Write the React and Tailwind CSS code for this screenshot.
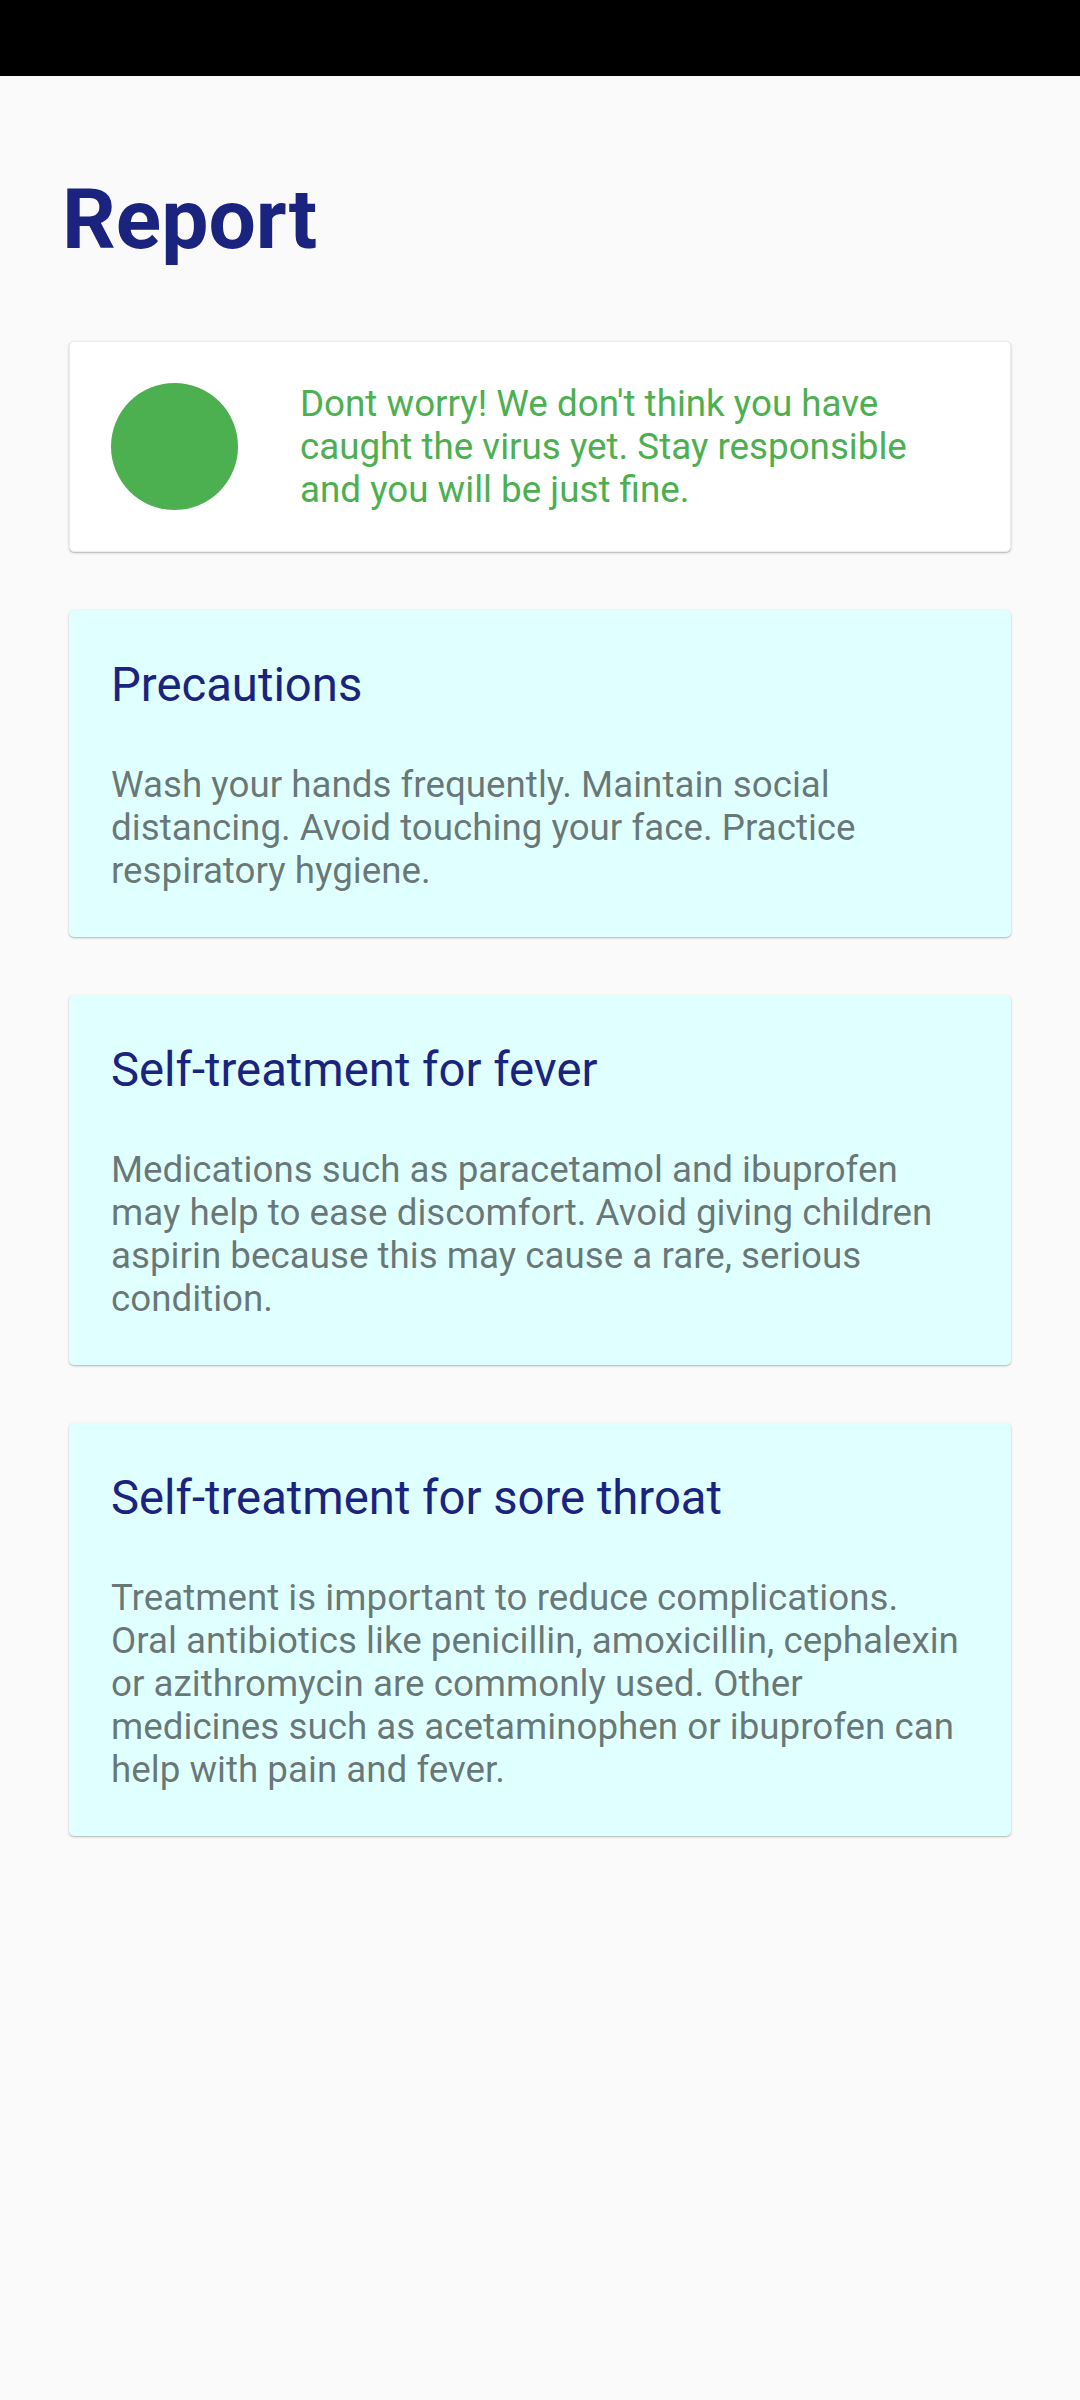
const tips = [
  {
    title: "Precautions",
    body: "Wash your hands frequently. Maintain social distancing. Avoid touching your face. Practice respiratory hygiene.",
  },
  {
    title: "Self-treatment for fever",
    body: "Medications such as paracetamol and ibuprofen may help to ease discomfort. Avoid giving children aspirin because this may cause a rare, serious condition.",
  },
  {
    title: "Self-treatment for sore throat",
    body: "Treatment is important to reduce complications. Oral antibiotics like penicillin, amoxicillin, cephalexin or azithromycin are commonly used. Other medicines such as acetaminophen or ibuprofen can help with pain and fever.",
  },
];

const cardShadow =
  "shadow-[0_1px_3px_rgba(0,0,0,0.18),0_1px_1px_rgba(0,0,0,0.12)]";

export default function App() {
  return (
    <div
      className="min-h-screen bg-[#fafafa]"
      style={{ fontFamily: "Roboto, 'Noto Sans', sans-serif" }}
    >
      <div className="h-[76px] bg-black" />

      <h1 className="mt-[95px] pl-[62px] text-[84px] leading-[98px] font-bold text-[#1a237e]">
        Report
      </h1>

      <div className="mt-[72px] px-[69px] flex flex-col gap-[58px]">
        <div
          className={`flex items-center bg-white rounded-[5px] border border-[#ececec] px-[41px] py-[40px] ${cardShadow}`}
        >
          <div className="w-[127px] h-[127px] shrink-0 rounded-full bg-[#4caf50]" />
          <p className="ml-[62px] text-[36.75px] leading-[43px] text-[#4caf50]">
            Dont worry! We don't think you have caught the virus yet. Stay
            responsible and you will be just fine.
          </p>
        </div>

        {tips.map((tip) => (
          <div
            key={tip.title}
            className={`bg-[#e0ffff] rounded-[5px] px-[42px] pt-[48px] pb-[45px] ${cardShadow}`}
          >
            <h2 className="text-[47.25px] leading-[55px] text-[#1a237e]">
              {tip.title}
            </h2>
            <p className="mt-[50px] text-[36.75px] leading-[43px] text-black/55">
              {tip.body}
            </p>
          </div>
        ))}
      </div>
    </div>
  );
}
